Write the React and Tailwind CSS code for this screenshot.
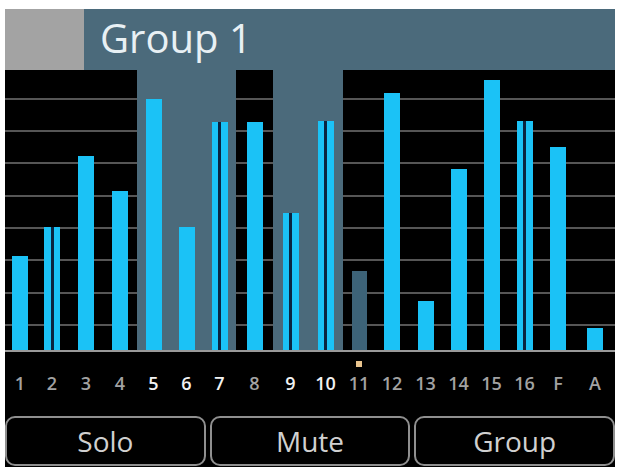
import React from 'react';

// channel strips: width of the column, meter height in px, stereo pair, selected in group
const channels = [
  { label: '1', w: 'w-[30px]', level: 94 },
  { label: '2', w: 'w-[34px]', level: 123, stereo: true },
  { label: '3', w: 'w-[34px]', level: 194 },
  { label: '4', w: 'w-[34px]', level: 159 },
  { label: '5', w: 'w-[33px]', level: 251, group: true },
  { label: '6', w: 'w-[33px]', level: 123, group: true },
  { label: '7', w: 'w-[33px]', level: 228, group: true, stereo: true },
  { label: '8', w: 'w-[37px]', level: 228 },
  { label: '9', w: 'w-[35px]', level: 137, group: true, stereo: true },
  { label: '10', w: 'w-[35px]', level: 229, group: true, stereo: true },
  { label: '11', w: 'w-[32px]', level: 79, muted: true, selected: true },
  { label: '12', w: 'w-[34px]', level: 257 },
  { label: '13', w: 'w-[33px]', level: 49 },
  { label: '14', w: 'w-[33px]', level: 181 },
  { label: '15', w: 'w-[33px]', level: 270 },
  { label: '16', w: 'w-[33px]', level: 229, stereo: true },
  { label: 'F', w: 'w-[34px]', level: 203 },
  { label: 'A', w: 'w-[40px]', level: 22 },
];

const gridLines = [28, 60, 92, 125, 157, 189, 222, 254];

function Meter({ ch }) {
  if (ch.muted) {
    return <div className="w-[15px] bg-[#3d6378]" style={{ height: ch.level }} />;
  }
  if (ch.stereo) {
    return (
      <div className="flex w-[16px] bg-[#1bc2f6]" style={{ height: ch.level }}>
        <div className="flex-1" />
        <div className="w-[3px] bg-[#0a2440]" />
        <div className="flex-1" />
      </div>
    );
  }
  return <div className="w-[16px] bg-[#1bc2f6]" style={{ height: ch.level }} />;
}

function App() {
  return (
    <div className="min-h-screen bg-white pt-[9px] pl-[5px]" style={{ fontFamily: '"Open Sans", "Liberation Sans", sans-serif' }}>
      <div className="w-[610px] bg-black">
        <header className="flex h-[61px] items-center bg-[#4b6a7b]">
          <div className="h-full w-[79px] bg-[#a3a3a3]" />
          <span className="ml-[16px] pb-[4px] text-[40px] leading-none text-[#e8f0f4]">Group 1</span>
        </header>

        <div className="relative flex h-[280px]">
          {gridLines.map((y) => (
            <div key={y} className="absolute left-0 right-0 h-[2px] bg-[#565656]" style={{ top: y }} />
          ))}
          {channels.map((ch) => (
            <div
              key={ch.label}
              className={`${ch.w} relative z-10 flex items-end justify-center ${ch.group ? 'bg-[#4b6a7b]' : ''}`}
            >
              <Meter ch={ch} />
            </div>
          ))}
        </div>
        <div className="h-[2px] bg-[#9a9a9a]" />

        <div className="flex h-[60px]">
          {channels.map((ch) => (
            <div key={ch.label} className={`${ch.w} relative flex items-center justify-center pt-[2px]`}>
              {ch.selected && <div className="absolute top-[9px] h-[6px] w-[6px] bg-[#e9c48e]" />}
              <span
                className={`text-[18px] font-semibold leading-none ${ch.group ? 'text-[#f2f2f2]' : 'text-[#a2a2a2]'}`}
              >
                {ch.label}
              </span>
            </div>
          ))}
        </div>

        <div className="flex h-[55px] gap-[4px] pt-[4px] pb-px">
          {['Solo', 'Mute', 'Group'].map((b) => (
            <button
              key={b}
              className="flex-1 rounded-[10px] border-2 border-[#8f8f8f] bg-black text-[28px] leading-none text-[#d0d0d0]"
            >
              {b}
            </button>
          ))}
        </div>
      </div>
    </div>
  );
}

export default App;
